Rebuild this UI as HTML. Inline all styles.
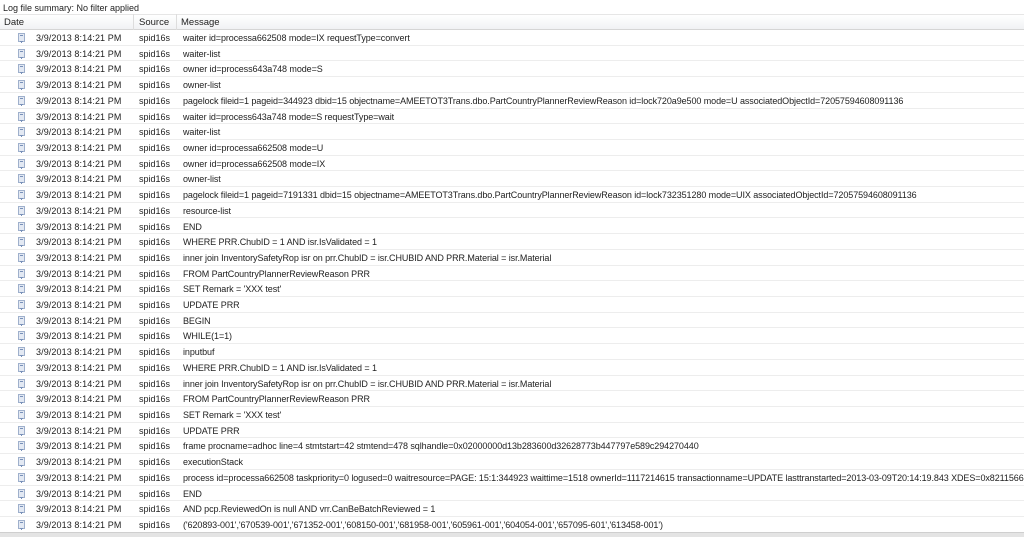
<!DOCTYPE html>
<html><head><style>
*{margin:0;padding:0;box-sizing:border-box}
body{width:1024px;height:537px;background:#fff;position:relative;overflow:hidden;font-family:"Liberation Sans",sans-serif;font-size:9px;color:#222}
.sum{position:absolute;left:3px;top:3px;font-size:9px;color:#222}
.hdr{position:absolute;left:0;top:14px;width:1024px;height:16px;background:linear-gradient(#fff,#f1f2f4);border-top:1px solid #e6e6e6;border-bottom:1px solid #d5d5d5}
.hdr span{position:absolute;top:2px;font-size:9.5px;color:#222}
.vl{position:absolute;top:14px;width:1px;height:16px;background:#ddd}
.r{position:absolute;left:0;width:1024px;height:15.7px;border-bottom:1px solid #ededed;white-space:nowrap}
.r span{position:absolute;top:3px}
.ic{position:absolute;left:18px;top:3px;width:7px;height:9px;background:#e3e9f3;border:1px solid #9fb0cc}
.ic:after{content:"";position:absolute;left:1px;top:1px;width:3px;height:5px;border-top:1px solid #7890b8;border-bottom:1px solid #7890b8;box-shadow:0 2px 0 -1px #7890b8}
.d{left:36px;letter-spacing:0.1px}.s{left:139px}.m{left:183px;letter-spacing:-0.08px}
.bot{position:absolute;left:0;top:532px;width:1024px;height:5px;background:#e4e4e4;border-top:1px solid #cfcfcf}
</style></head><body>
<div class="sum">Log file summary: No filter applied</div>
<div class="hdr"><span style="left:4px">Date</span><span style="left:139px">Source</span><span style="left:181px">Message</span></div>
<div class="vl" style="left:133px"></div><div class="vl" style="left:176px"></div>
<div id="rows"></div>
<div class="bot"></div>
<script>
var m=["waiter id=processa662508 mode=IX requestType=convert","waiter-list","owner id=process643a748 mode=S","owner-list","pagelock fileid=1 pageid=344923 dbid=15 objectname=AMEETOT3Trans.dbo.PartCountryPlannerReviewReason id=lock720a9e500 mode=U associatedObjectId=72057594608091136","waiter id=process643a748 mode=S requestType=wait","waiter-list","owner id=processa662508 mode=U","owner id=processa662508 mode=IX","owner-list","pagelock fileid=1 pageid=7191331 dbid=15 objectname=AMEETOT3Trans.dbo.PartCountryPlannerReviewReason id=lock732351280 mode=UIX associatedObjectId=72057594608091136","resource-list","END","WHERE PRR.ChubID = 1 AND isr.IsValidated = 1","inner join InventorySafetyRop isr on prr.ChubID = isr.CHUBID AND PRR.Material = isr.Material","FROM PartCountryPlannerReviewReason PRR","SET Remark = 'XXX test'","UPDATE PRR","BEGIN","WHILE(1=1)","inputbuf","WHERE PRR.ChubID = 1 AND isr.IsValidated = 1","inner join InventorySafetyRop isr on prr.ChubID = isr.CHUBID AND PRR.Material = isr.Material","FROM PartCountryPlannerReviewReason PRR","SET Remark = 'XXX test'","UPDATE PRR","frame procname=adhoc line=4 stmtstart=42 stmtend=478 sqlhandle=0x02000000d13b283600d32628773b447797e589c294270440","executionStack","process id=processa662508 taskpriority=0 logused=0 waitresource=PAGE: 15:1:344923 waittime=1518 ownerId=1117214615 transactionname=UPDATE lasttranstarted=2013-03-09T20:14:19.843 XDES=0x8211566c","END","AND pcp.ReviewedOn is null AND vrr.CanBeBatchReviewed = 1","('620893-001','670539-001','671352-001','608150-001','681958-001','605961-001','604054-001','657095-601','613458-001')"];
var h="";
for(var i=0;i<m.length;i++){var t=(30+i*15.71).toFixed(2);
h+='<div class="r" style="top:'+t+'px"><div class="ic"></div><span class="d">3/9/2013 8:14:21 PM</span><span class="s">spid16s</span><span class="m">'+m[i].replace(/&/g,"&amp;").replace(/</g,"&lt;")+'</span></div>';}
document.getElementById("rows").innerHTML=h;
</script>
</body></html>
